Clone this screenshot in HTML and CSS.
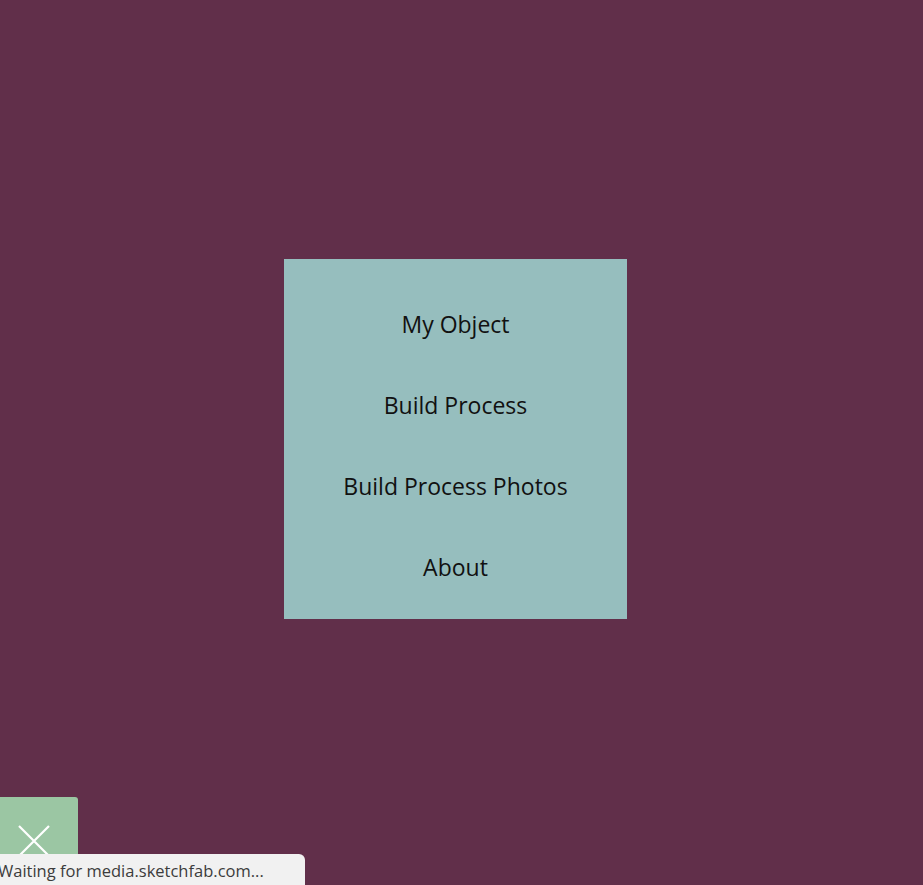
FILE: index.html
```html
<!DOCTYPE html>
<html lang="en">
<head>
<meta charset="utf-8">
<title>Menu</title>
<link rel="stylesheet" href="styles.css">
</head>
<body>
<main class="page">
  <nav class="menu">
    <a class="menu-item" href="#">My Object</a>
    <a class="menu-item" href="#">Build Process</a>
    <a class="menu-item" href="#">Build Process Photos</a>
    <a class="menu-item" href="#">About</a>
  </nav>
</main>
<button class="close-btn" aria-label="Close">
  <svg width="34" height="34" viewBox="0 0 34 34"><path d="M2 2 L32 32 M32 2 L2 32" stroke="#fff" stroke-width="2.2" fill="none"/></svg>
</button>
<div class="status">Waiting for media.sketchfab.com...</div>
</body>
</html>
```

FILE: styles.css
```css
html, body {
  margin: 0;
  padding: 0;
}
body {
  background: #612f4a;
  width: 923px;
  height: 885px;
  overflow: hidden;
  font-family: "Open Sans", "Noto Sans", sans-serif;
}
.page {
  padding: 259px 0 0 284px;
}
.menu {
  width: 343px;
  height: 360px;
  box-sizing: border-box;
  background: #96bebe;
  padding: 24px 0 12px;
  display: flex;
  flex-direction: column;
}
.menu-item {
  height: 81px;
  display: flex;
  align-items: center;
  justify-content: center;
  color: #111;
  text-decoration: none;
  font-size: 23px;
}
.close-btn {
  position: fixed;
  left: 0;
  top: 797px;
  width: 78px;
  height: 100px;
  border: 0;
  padding: 27px 10px 0 0;
  background: #9bc6a3;
  border-top-right-radius: 3px;
  display: flex;
  justify-content: center;
  align-items: flex-start;
}
.status {
  position: fixed;
  left: -2px;
  top: 854px;
  width: 307px;
  height: 31px;
  box-sizing: border-box;
  background: #f1f1f1;
  border-top-right-radius: 6px;
  font-family: "Open Sans", "Noto Sans", sans-serif;
  font-size: 16.5px;
  color: #3c3c3c;
  padding: 5px 0 0 0;
  line-height: 24px;
  white-space: nowrap;
}
```
